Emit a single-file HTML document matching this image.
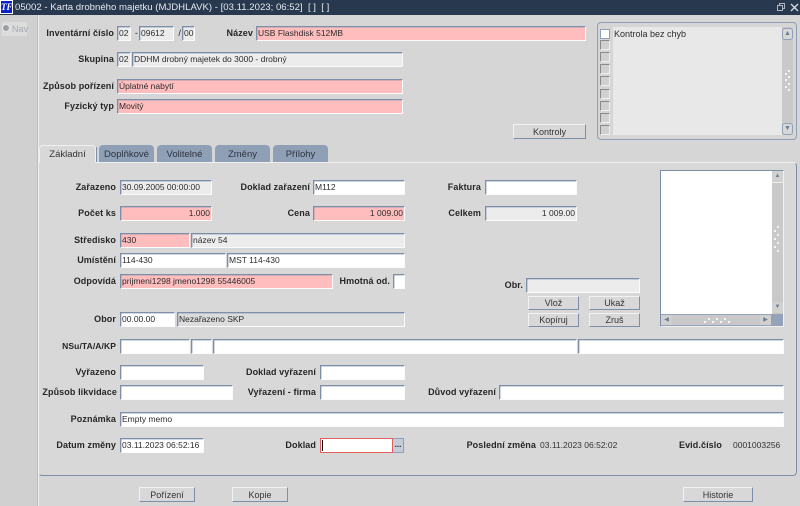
<!DOCTYPE html>
<html lang="cs"><head><meta charset="utf-8"><title>Karta drobného majetku</title>
<style>
html,body{margin:0;padding:0;width:800px;height:506px;overflow:hidden;background:#d6d6d6}
body{position:relative;font-family:"Liberation Sans",sans-serif;font-size:9px;color:#222}
#r{position:absolute;left:0;top:0;width:800px;height:506px;filter:blur(.35px)}
#r div,#r span.a{position:absolute;box-sizing:border-box;white-space:nowrap}
.l{font-weight:bold;text-align:right;height:15px;line-height:15px;color:#262626;font-size:9px;letter-spacing:.1px}
.f{height:15px;line-height:13px;background:#fff;border:1px solid #fbfbfb;border-top:1px solid #7d8ea9;border-left:1px solid #7d8ea9;box-shadow:inset 0 1px 0 rgba(125,142,169,.35),inset 1px 0 0 rgba(125,142,169,.35);padding:0 1px;overflow:hidden;color:#2c2c2c;font-size:8.5px}
.p{background:#ffbdbd}.g{background:#ececec}
.ra{text-align:right}
.b{background:#d8d8d8;border:1px solid #7d8ea9;border-top:1px solid #f2f2f2;border-left:1px solid #f2f2f2;text-align:center;color:#333;font-size:9px}
.t{top:145px;height:17px;line-height:19px;background:#8f9fb6;border-radius:4px 4px 0 0;text-align:center;font-size:9.5px;color:#2c3440}
.c{left:600px;width:10px;height:10px;background:#d0d0d0;border:1px solid #8a8a8a;border-right-color:#f0f0f0;border-bottom-color:#f0f0f0}
.s{background:#c9c9c9}
.d{width:2px;height:2px;background:#f4f4f4}
</style></head><body><div id="r">
<div style="left:0;top:0;width:800px;height:15px;background:#27384f;color:#e6e9ee;font-size:9.6px;line-height:16px;padding-left:15px">05002 - Karta drobného majetku (MJDHLAVK) - [03.11.2023; 06:52]&nbsp; [ ]&nbsp; [ ]</div>
<div style="left:0;top:0;width:13px;height:14px;background:#0a22c8;border:1px solid #fff;color:#fff;font:italic bold 9px/12px 'Liberation Serif',serif;text-align:center">TF</div>
<svg style="position:absolute;left:776px;top:2px" width="24" height="11" viewBox="0 0 24 11"><g fill="none" stroke="#aeb6c2" stroke-width="1"><rect x="1.5" y="3.5" width="5" height="5"/><path d="M3.5 3.5v-2h5v5h-2"/><path d="M15 2l7 7M22 2l-7 7" stroke="#d6dae0" stroke-width="1.4"/></g></svg>

<div style="left:0;top:15px;width:37px;height:491px;background:#d0d0d0"></div>
<div style="left:37px;top:15px;width:1px;height:491px;background:#bdbdbd"></div>
<div style="left:38px;top:15px;width:1px;height:491px;background:#ededed"></div>
<div style="left:2px;top:22px;width:25px;height:14px;background:#dcdcdc"></div>
<div style="left:2px;top:24px;width:8px;height:8px;background:#9a9fa6;border-radius:50%;border:1px solid #e8e8e8"></div>
<div style="left:12px;top:22px;height:14px;line-height:14px;color:#a4a9b2;font-size:9px">Nav</div>

<div class="l" style="left:38px;width:76px;top:26px">Inventární číslo</div>
<div class="f g" style="left:117px;top:26px;width:14px">02</div>
<div class="l" style="left:132px;width:6px;top:26px;font-weight:normal">-</div>
<div class="f g" style="left:139px;top:26px;width:35px">09612</div>
<div class="l" style="left:175px;width:6px;top:26px;font-weight:normal">/</div>
<div class="f g" style="left:182px;top:26px;width:13px">00</div>
<div class="l" style="left:200px;width:53px;top:26px">Název</div>
<div class="f p" style="left:256px;top:26px;width:330px">USB Flashdisk 512MB</div>
<div class="l" style="left:38px;width:76px;top:52px">Skupina</div>
<div class="f g" style="left:117px;top:52px;width:14px">02</div>
<div class="f g" style="left:132px;top:52px;width:271px">DDHM drobný majetek do 3000 - drobný</div>
<div class="l" style="left:38px;width:76px;top:79px">Způsob pořízení</div>
<div class="f p" style="left:117px;top:79px;width:286px">Úplatné nabytí</div>
<div class="l" style="left:38px;width:76px;top:99px">Fyzický typ</div>
<div class="f p" style="left:117px;top:99px;width:286px">Movitý</div>
<div class="b" style="left:513px;top:124px;width:73px;height:15px;line-height:14px">Kontroly</div>

<div style="left:597px;top:22px;width:200px;height:118px;border:1px solid #8f9fb6;border-radius:4px;background:#d6d6d6"></div>
<div style="left:613px;top:27px;width:169px;height:108px;background:#e8e8e8"></div>
<div style="left:614px;top:27px;height:14px;line-height:14px;font-size:9px;color:#2c2c2c">Kontrola bez chyb</div>
<div class="c" style="top:29px;background:#fff;border-color:#8fa0c0"></div>
<div class="c" style="top:40px"></div><div class="c" style="top:52px"></div><div class="c" style="top:64px"></div><div class="c" style="top:76px"></div><div class="c" style="top:89px"></div><div class="c" style="top:101px"></div><div class="c" style="top:113px"></div><div class="c" style="top:125px"></div>
<div class="s" style="left:782px;top:27px;width:11px;height:108px"></div>
<div class="b" style="left:782px;top:28px;width:11px;height:12px;border:1px solid #8f9fb6;border-radius:3px;color:#6c7c96;font-size:7px;line-height:10px">▲</div>
<div class="b" style="left:782px;top:123px;width:11px;height:12px;border:1px solid #8f9fb6;border-radius:3px;color:#6c7c96;font-size:7px;line-height:10px">▼</div>
<div class="d" style="left:788px;top:70px"></div><div class="d" style="left:785px;top:73px"></div><div class="d" style="left:788px;top:76px"></div><div class="d" style="left:785px;top:79px"></div><div class="d" style="left:788px;top:83px"></div><div class="d" style="left:785px;top:86px"></div><div class="d" style="left:788px;top:89px"></div>

<div style="left:38px;top:162px;width:759px;height:314px;background:#d8d8d8;border:1px solid #7d8ea9;border-top:1px solid #f0f0f0;border-left:1px solid #f0f0f0;border-radius:0 4px 4px 4px"></div>
<div class="t" style="left:39px;width:57px;background:#d8d8d8;border:1px solid #f0f0f0;border-bottom:0;color:#333;height:18px;line-height:18px">Základní</div>
<div style="left:96px;top:147px;width:1px;height:15px;background:#7d8ea9"></div>
<div class="t" style="left:99px;width:55px">Doplňkové</div>
<div class="t" style="left:157px;width:55px">Volitelné</div>
<div class="t" style="left:215px;width:55px">Změny</div>
<div class="t" style="left:273px;width:55px">Přílohy</div>

<div class="l" style="left:60px;width:56px;top:180px">Zařazeno</div>
<div class="f g" style="left:120px;top:180px;width:92px">30.09.2005 00:00:00</div>
<div class="l" style="left:220px;width:90px;top:180px">Doklad zařazení</div>
<div class="f" style="left:313px;top:180px;width:92px">M112</div>
<div class="l" style="left:430px;width:51px;top:180px">Faktura</div>
<div class="f" style="left:485px;top:180px;width:92px"></div>
<div class="l" style="left:60px;width:56px;top:206px">Počet ks</div>
<div class="f p ra" style="left:120px;top:206px;width:92px">1.000</div>
<div class="l" style="left:250px;width:60px;top:206px">Cena</div>
<div class="f p ra" style="left:313px;top:206px;width:92px">1 009.00</div>
<div class="l" style="left:430px;width:51px;top:206px">Celkem</div>
<div class="f g ra" style="left:485px;top:206px;width:92px">1 009.00</div>
<div class="l" style="left:60px;width:56px;top:233px">Středisko</div>
<div class="f p" style="left:120px;top:233px;width:70px">430</div>
<div class="f g" style="left:191px;top:233px;width:214px">název 54</div>
<div class="l" style="left:60px;width:56px;top:253px">Umístění</div>
<div class="f" style="left:120px;top:253px;width:106px">114-430</div>
<div class="f" style="left:227px;top:253px;width:178px">MST 114-430</div>
<div class="l" style="left:60px;width:56px;top:274px">Odpovídá</div>
<div class="f p" style="left:120px;top:274px;width:213px">prijmeni1298 jmeno1298 55446005</div>
<div class="l" style="left:330px;width:60px;top:274px">Hmotná od.</div>
<div class="f" style="left:393px;top:274px;width:12px"></div>
<div class="l" style="left:60px;width:56px;top:312px">Obor</div>
<div class="f" style="left:120px;top:312px;width:55px">00.00.00</div>
<div class="f g" style="left:177px;top:312px;width:228px;background:#dcdcdc">Nezařazeno SKP</div>

<div class="l" style="left:480px;width:43px;top:278px">Obr.</div>
<div class="f g" style="left:526px;top:278px;width:114px"></div>
<div class="b" style="left:528px;top:296px;width:51px;height:14px;line-height:13px">Vlož</div>
<div class="b" style="left:589px;top:296px;width:51px;height:14px;line-height:13px">Ukaž</div>
<div class="b" style="left:528px;top:313px;width:51px;height:14px;line-height:13px">Kopíruj</div>
<div class="b" style="left:589px;top:313px;width:51px;height:14px;line-height:13px">Zruš</div>

<div style="left:660px;top:170px;width:124px;height:157px;background:#fff;border:1px solid #7d8ea9;border-right:1px solid #f0f0f0;border-bottom:1px solid #f0f0f0"></div>
<div style="left:772px;top:171px;width:11px;height:155px;background:#c9c9c9"></div>
<div style="left:661px;top:314px;width:122px;height:12px;background:#94a3ba"></div>
<div class="s" style="left:672px;top:315px;width:88px;height:10px"></div>
<div class="b" style="left:661px;top:315px;width:11px;height:10px;border:0;background:#d0d0d0;color:#6c7c96;font-size:6px;line-height:10px">◀</div>
<div class="b" style="left:760px;top:315px;width:11px;height:10px;border:0;background:#d0d0d0;color:#6c7c96;font-size:6px;line-height:10px">▶</div>
<div class="b" style="left:772px;top:171px;width:11px;height:12px;border:0;border-bottom:1px solid #f0f0f0;background:#d0d0d0;color:#6c7c96;font-size:6px;line-height:11px">▲</div>
<div class="b" style="left:772px;top:302px;width:11px;height:11px;border:0;background:#d0d0d0;color:#6c7c96;font-size:6px;line-height:11px">▼</div>
<div class="d" style="left:777px;top:226px"></div><div class="d" style="left:774px;top:230px"></div><div class="d" style="left:777px;top:234px"></div><div class="d" style="left:774px;top:238px"></div><div class="d" style="left:777px;top:242px"></div><div class="d" style="left:774px;top:246px"></div><div class="d" style="left:777px;top:250px"></div>
<div class="d" style="left:704px;top:321px"></div><div class="d" style="left:708px;top:318px"></div><div class="d" style="left:712px;top:321px"></div><div class="d" style="left:716px;top:318px"></div><div class="d" style="left:720px;top:321px"></div><div class="d" style="left:724px;top:318px"></div><div class="d" style="left:728px;top:321px"></div>

<div class="l" style="left:45px;width:71px;top:339px;font-size:8.5px">NSu/TA/A/KP</div>
<div class="f" style="left:120px;top:339px;width:70px"></div>
<div class="f" style="left:191px;top:339px;width:21px"></div>
<div class="f" style="left:213px;top:339px;width:364px"></div>
<div class="f" style="left:578px;top:339px;width:206px"></div>
<div class="l" style="left:45px;width:71px;top:365px">Vyřazeno</div>
<div class="f" style="left:120px;top:365px;width:84px"></div>
<div class="l" style="left:230px;width:86px;top:365px">Doklad vyřazení</div>
<div class="f" style="left:320px;top:365px;width:85px"></div>
<div class="l" style="left:40px;width:77px;top:385px">Způsob likvidace</div>
<div class="f" style="left:120px;top:385px;width:113px"></div>
<div class="l" style="left:230px;width:86px;top:385px">Vyřazení - firma</div>
<div class="f" style="left:320px;top:385px;width:85px"></div>
<div class="l" style="left:420px;width:76px;top:385px">Důvod vyřazení</div>
<div class="f" style="left:499px;top:385px;width:285px"></div>
<div class="l" style="left:45px;width:71px;top:412px">Poznámka</div>
<div class="f" style="left:120px;top:412px;width:664px">Empty memo</div>
<div class="l" style="left:45px;width:71px;top:438px">Datum změny</div>
<div class="f" style="left:120px;top:438px;width:84px">03.11.2023 06:52:16</div>
<div class="l" style="left:260px;width:56px;top:438px">Doklad</div>
<div style="left:320px;top:438px;width:73px;height:15px;background:#fff;border:1px solid #e06060"></div>
<div style="left:322px;top:440px;width:1px;height:11px;background:#111"></div>
<div style="left:393px;top:438px;width:11px;height:15px;background:#c4ccd8;border:1px solid #8f9fb6;border-left:0;color:#222;font-size:8px;line-height:11px;font-weight:bold;text-align:center">...</div>
<div class="l" style="left:450px;width:86px;top:438px">Poslední změna</div>
<div style="left:540px;top:438px;height:15px;line-height:15px;color:#333;font-size:8.5px">03.11.2023 06:52:02</div>
<div class="l" style="left:660px;width:62px;top:438px">Evid.číslo</div>
<div style="left:733px;top:438px;height:15px;line-height:15px;color:#333;font-size:8.5px">0001003256</div>

<div class="b" style="left:139px;top:487px;width:56px;height:15px;line-height:14px">Pořízení</div>
<div class="b" style="left:232px;top:487px;width:56px;height:15px;line-height:14px">Kopie</div>
<div class="b" style="left:683px;top:487px;width:70px;height:15px;line-height:14px">Historie</div>
</div></body></html>
